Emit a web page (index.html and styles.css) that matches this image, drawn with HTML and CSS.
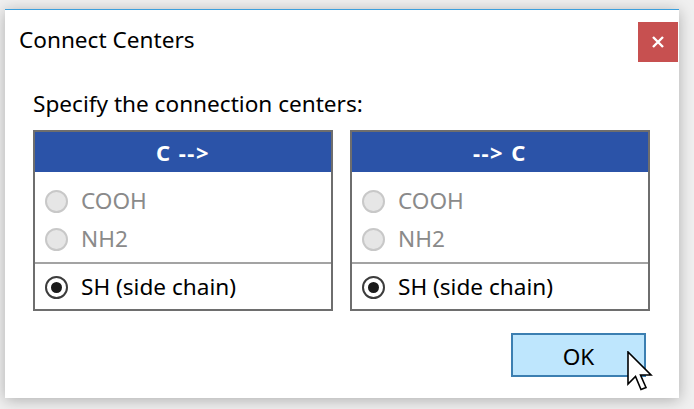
FILE: index.html
```html
<!DOCTYPE html>
<html>
<head>
<meta charset="utf-8">
<link rel="stylesheet" href="styles.css">
</head>
<body>
<div class="dialog">
  <div class="titlebar">
    <span class="title">Connect Centers</span>
    <button class="close" aria-label="Close">
      <svg width="14" height="14" viewBox="0 0 14 14"><path d="M2 2 L12 12 M12 2 L2 12" stroke="#fff" stroke-width="2.4" stroke-linecap="butt"/></svg>
    </button>
  </div>
  <div class="content">
    <p class="prompt">Specify the connection centers:</p>
    <div class="panels">
      <div class="panel">
        <div class="panel-head">C --&gt;</div>
        <div class="group">
          <div class="opt disabled"><span class="radio"></span><span>COOH</span></div>
          <div class="opt disabled"><span class="radio"></span><span>NH2</span></div>
        </div>
        <div class="sep"></div>
        <div class="group last">
          <div class="opt"><span class="radio checked"></span><span>SH (side chain)</span></div>
        </div>
      </div>
      <div class="panel">
        <div class="panel-head">--&gt; C</div>
        <div class="group">
          <div class="opt disabled"><span class="radio"></span><span>COOH</span></div>
          <div class="opt disabled"><span class="radio"></span><span>NH2</span></div>
        </div>
        <div class="sep"></div>
        <div class="group last">
          <div class="opt"><span class="radio checked"></span><span>SH (side chain)</span></div>
        </div>
      </div>
    </div>
    <div class="actions">
      <button class="ok">OK</button>
    </div>
  </div>
  <svg class="cursor" width="28" height="42" viewBox="0 0 28 42">
    <path d="M1 1 L1 33 L8.5 25.5 L14 38.5 L19 36.5 L13.5 24 L24 24 Z" fill="#fff" stroke="#000" stroke-width="1.6" stroke-linejoin="miter"/>
  </svg>
</div>
</body>
</html>
```
FILE: styles.css
```css
* { box-sizing: border-box; }
html, body { margin: 0; padding: 0; }
body {
  width: 694px;
  height: 409px;
  background: #f0f0f0;
  font-family: "Noto Sans", "Open Sans", sans-serif;
  overflow: hidden;
  padding: 9px 0 0 5px;
}
.dialog {
  position: relative;
  width: 674px;
  height: 389px;
  background: #fff;
  border-top: 1px solid #3a9fdd;
  box-shadow: 0 2px 14px rgba(0,0,0,0.28);
}
.titlebar {
  display: flex;
  align-items: center;
  justify-content: space-between;
  padding: 12px 1px 0 14px;
}
.title {
  font-size: 22.6px;
  line-height: 30px;
  color: #000;
  margin-top: -4px;
}
.close {
  width: 40px;
  height: 40px;
  border: none;
  padding: 0;
  background: #c75050;
  display: flex;
  align-items: center;
  justify-content: center;
}
.content {
  padding: 0 29px 0 28px;
}
.prompt {
  margin: 27px 0 0 0;
  font-size: 22.6px;
  line-height: 30px;
  height: 30px;
  color: #000;
}
.panels {
  display: flex;
  gap: 17px;
  margin-top: 11px;
}
.panel {
  width: 300px;
  border: 2px solid #6e6e6e;
  background: #fff;
}
.panel-head {
  height: 40px;
  background: #2b53a8;
  color: #fff;
  font-weight: bold;
  font-size: 22px;
  letter-spacing: 1.5px;
  display: flex;
  align-items: center;
  justify-content: center;
}
.group {
  padding: 10px 0 4px 0;
}
.group.last {
  padding: 4px 0 3px 0;
}
.opt {
  height: 38px;
  line-height: 30px;
  display: flex;
  align-items: center;
  padding-left: 10px;
  font-size: 22.6px;
  color: #000;
}
.opt.disabled { color: #8a8a8a; }
.opt .radio {
  width: 23px;
  height: 23px;
  border-radius: 50%;
  border: 2px solid #3c3c3c;
  background: #fff;
  margin-right: 13px;
  flex: none;
  display: flex;
  align-items: center;
  justify-content: center;
}
.opt.disabled .radio {
  border: 2px solid #c8c8c8;
  background: #e6e6e6;
}
.radio.checked::after {
  content: "";
  width: 11px;
  height: 11px;
  border-radius: 50%;
  background: #1a1a1a;
}
.sep {
  height: 2px;
  background: #a3a3a3;
}
.actions {
  display: flex;
  justify-content: flex-end;
  margin-top: 22px;
  padding-right: 4px;
}
.ok {
  width: 135px;
  height: 44px;
  background: #bee6fd;
  border: 2px solid #3c7fb1;
  font-family: "Noto Sans", "Open Sans", sans-serif;
  font-size: 22.6px;
  line-height: 30px;
  color: #000;
  padding: 3px 0 0 0;
}
.cursor {
  position: absolute;
  left: 622px;
  top: 341px;
}
```
